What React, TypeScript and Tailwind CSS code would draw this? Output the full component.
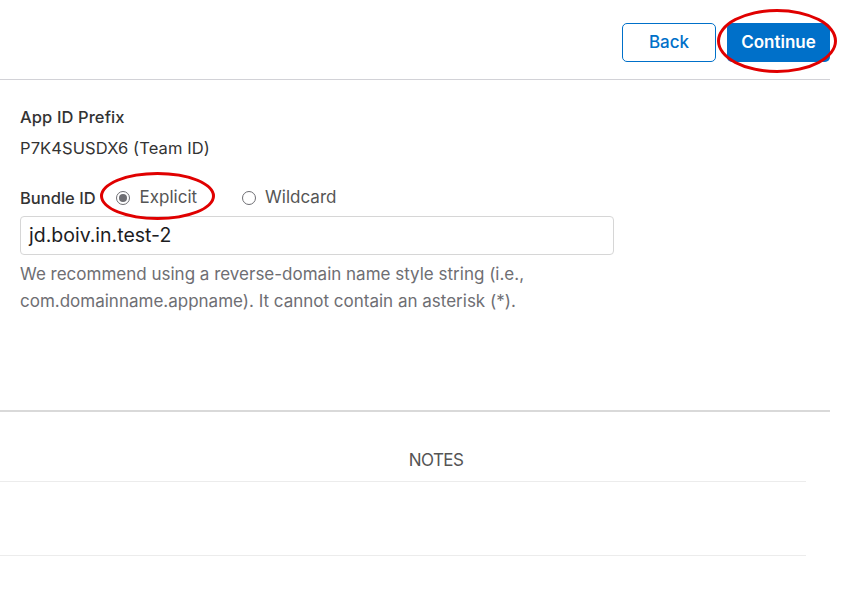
export default function App() {
  return (
    <div className="relative w-[852px] h-[600px] bg-white overflow-hidden" style={{ fontFamily: "Inter, 'Noto Sans', sans-serif" }}>
      {/* Header */}
      <div className="w-[830px] h-[80px] border-b border-[#d2d2d7] flex items-start justify-end gap-[11px] pt-[23px]">
        <button className="w-[94px] h-[39px] rounded-[5px] border border-[#0070c9] text-[#0070c9] text-[17px] font-medium">Back</button>
        <button className="w-[103px] h-[39px] rounded-[5px] bg-[#0070c9] text-white text-[17px] font-semibold">Continue</button>
      </div>

      {/* Form */}
      <div className="pl-[20px] pt-[26px] text-[#333]">
        <div className="text-[16.5px] font-medium leading-[22px] tracking-[0.1px]">App ID Prefix</div>
        <div className="text-[16.5px] leading-[22px] mt-[9px] tracking-[0.1px]">P7K4SUSDX6 (Team ID)</div>
        <div className="flex items-center mt-[28px] h-[22px]">
          <span className="text-[16.5px] font-medium">Bundle ID</span>
          <span className="ml-[20px] w-[14px] h-[14px] rounded-full border border-[#6e6e73] flex items-center justify-center">
            <span className="w-[8px] h-[8px] rounded-full bg-[#6e6e73]" />
          </span>
          <span className="ml-[10px] text-[17px] text-[#555]">Explicit</span>
          <span className="ml-[45px] w-[14px] h-[14px] rounded-full border border-[#6e6e73]" />
          <span className="ml-[9px] text-[17px] text-[#555]">Wildcard</span>
        </div>
        <div className="mt-[7px] w-[594px] h-[39px] rounded-[4px] border border-[#d6d6d6] flex items-center px-[8px] text-[19.5px] text-[#1d1d1f]">
          jd.boiv.in.test-2
        </div>
        <p className="mt-[6px] text-[17px] leading-[27px] text-[#6e6e73]">
          We recommend using a reverse-domain name style string (i.e.,
          <br />
          com.domainname.appname). It cannot contain an asterisk (*).
        </p>
      </div>

      {/* Notes section */}
      <div className="mt-[95px] w-[830px] border-t-2 border-[#d9d9d9]">
        <div className="w-[806px] h-[70px] border-b border-[#ececec] flex items-end justify-center pb-[8px]">
          <span className="text-[17px] text-[#555] tracking-[-0.6px] ml-[66px]">NOTES</span>
        </div>
        <div className="w-[806px] h-[74px] border-b border-[#ececec]" />
      </div>

      {/* Red annotation ellipses */}
      <div className="absolute left-[717px] top-[9px] w-[120px] h-[64px] rounded-[50%] border-[3px] border-[#e00000]" />
      <div className="absolute left-[100px] top-[172px] w-[115px] h-[48px] rounded-[50%] border-[3px] border-[#e00000]" />
    </div>
  );
}
